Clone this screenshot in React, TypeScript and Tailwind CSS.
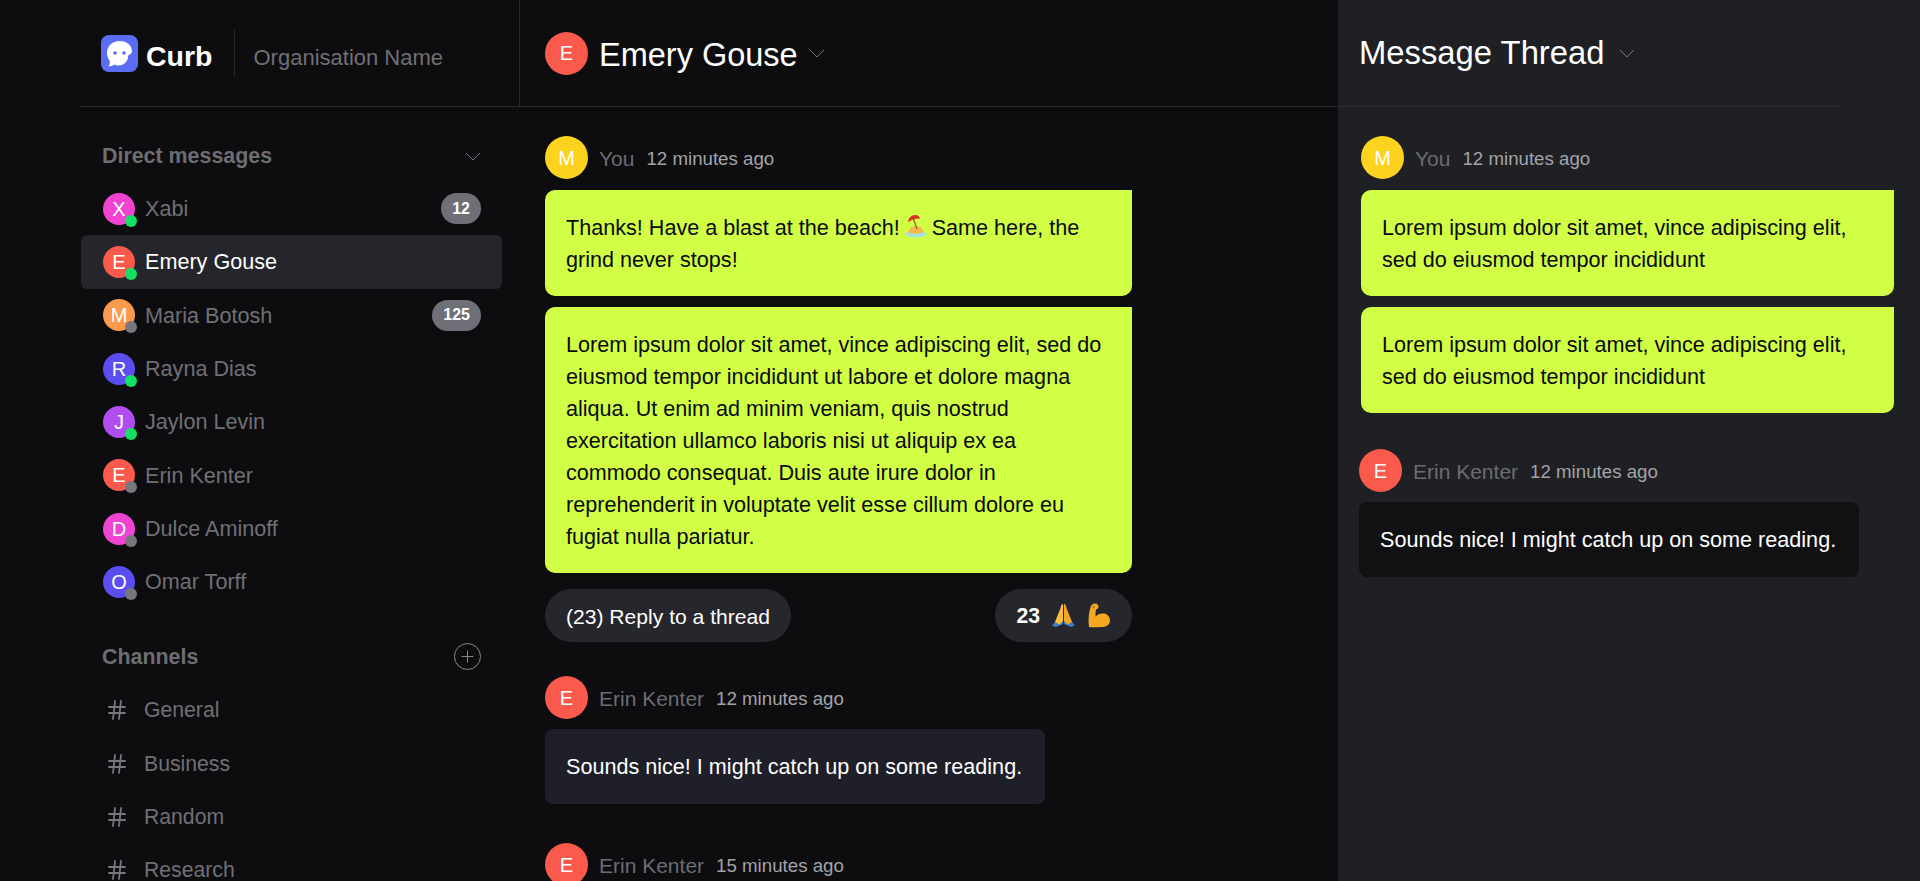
import { Hash, Plus } from "lucide-react";

type Person = { name: string; letter: string; color: string; online: boolean; badge?: string };

const people: Person[] = [
  { name: "Xabi", letter: "X", color: "bg-[#f043d0]", online: true, badge: "12" },
  { name: "Emery Gouse", letter: "E", color: "bg-[#f95a4c]", online: true },
  { name: "Maria Botosh", letter: "M", color: "bg-[#fb9a4d]", online: false, badge: "125" },
  { name: "Rayna Dias", letter: "R", color: "bg-[#5b4ef0]", online: true },
  { name: "Jaylon Levin", letter: "J", color: "bg-[#b04df0]", online: true },
  { name: "Erin Kenter", letter: "E", color: "bg-[#f95a4c]", online: false },
  { name: "Dulce Aminoff", letter: "D", color: "bg-[#ef44d2]", online: false },
  { name: "Omar Torff", letter: "O", color: "bg-[#5b4ef0]", online: false },
];

const channels = ["General", "Business", "Random", "Research"];

const loremShort = "Lorem ipsum dolor sit amet, vince adipiscing elit, sed do eiusmod tempor incididunt";
const loremLong =
  "Lorem ipsum dolor sit amet, vince adipiscing elit, sed do eiusmod tempor incididunt ut labore et dolore magna aliqua. Ut enim ad minim veniam, quis nostrud exercitation ullamco laboris nisi ut aliquip ex ea commodo consequat. Duis aute irure dolor in reprehenderit in voluptate velit esse cillum dolore eu fugiat nulla pariatur.";

function Chevron({ className }: { className?: string }) {
  return (
    <svg width="16" height="9" viewBox="0 0 16 9" fill="none" className={className}>
      <path d="M1 1l7 7 7-7" stroke="currentColor" strokeWidth="1" />
    </svg>
  );
}

function Logo() {
  return (
    <svg width="37" height="37" viewBox="0 0 37 37" className="shrink-0">
      <rect width="37" height="37" rx="8" fill="#5b6df2" />
      <path
        d="M18.500 6C26 6 31 10.500 31 16.500C31 18 30 18.800 28.500 19.500C27 20.200 26.500 21.500 27 23C26 27.500 22 30.500 17.500 30.500C16 30.500 14.500 30.100 13.500 29.500C12 30.700 9.500 31.500 7.500 31.500C8.600 30 9 28 8.800 26C6.800 23.500 6 20.500 6 17.500C6 11 11.500 6 18.500 6Z"
        fill="#fff"
      />
      <circle cx="14" cy="18" r="1.800" fill="#5b6df2" />
      <circle cx="23" cy="18" r="1.800" fill="#5b6df2" />
    </svg>
  );
}

function IslandEmoji() {
  return (
    <svg width="22" height="24" viewBox="0 0 22 24" className="mx-[5px] inline-block align-[-3px]">
      <ellipse cx="11" cy="20" rx="10.500" ry="3.500" fill="#a6e3d8" />
      <path d="M3 18c1-4 5-6 8-6s7 2 8 6c-3 2-13 2-16 0Z" fill="#f6b84a" />
      <path d="M8.500 5l3.500 10" stroke="#8a5a33" strokeWidth="1.200" />
      <path d="M3 8C3.500 3.500 7 .5 11 1c2.500.3 3.500 2 4 3.500C11 4.500 7 5.500 3 8Z" fill="#d8352a" />
    </svg>
  );
}

function PrayEmoji() {
  return (
    <svg width="25" height="25" viewBox="0 0 25 25" className="shrink-0">
      <path d="M4 19l-3 3.500 4 1.500 7-3V18Z" fill="#3f7fc4" />
      <path d="M21 19l3 3.500-4 1.500-7-3V18Z" fill="#3f7fc4" />
      <path d="M12 1c-1.500 0-2 1.500-2.500 4L4 19l4.500 2.500L12 18Z" fill="#fbbf3c" />
      <path d="M13 1c1.500 0 2 1.500 2.500 4L21 19l-4.500 2.500L13 18Z" fill="#f5a623" />
    </svg>
  );
}

function MuscleEmoji() {
  return (
    <svg width="24" height="26" viewBox="0 0 24 26" className="shrink-0">
      <path
        d="M2 24C1 16 2 8 4 3c.6-1.500 2-2.500 4-2.500 2.500 0 3.500 1.500 3.500 3 0 1.500-1 2.500-2.500 3-.5 2.500-.5 5-.3 7 2-2.500 5.300-3.500 8.300-3 3.500.6 6 3.500 6 7 0 4-3.500 6.500-8 6.500-5 0-9 .8-13 0Z"
        fill="#f7a823"
      />
      <circle cx="6.500" cy="4" r="1.300" fill="#c97c10" />
    </svg>
  );
}

function Avatar({ letter, color, size = "big" }: { letter: string; color: string; size?: "big" | "small" }) {
  const dims = size === "big" ? "size-[43px] text-[20px]" : "size-[32px] text-[20px]";
  return (
    <div className={`flex shrink-0 items-center justify-center rounded-full text-white ${dims} ${color}`}>{letter}</div>
  );
}

function PersonRow({ person, active }: { person: Person; active: boolean }) {
  return (
    <div className={`flex h-[53.33px] items-center rounded-md pr-[21px] pl-[22px] ${active ? "bg-[#25262c]" : ""}`}>
      <div className="relative">
        <Avatar letter={person.letter} color={person.color} size="small" />
        <span
          className={`absolute top-[22px] left-[22px] size-[12px] rounded-full ${person.online ? "bg-[#14e064]" : "bg-[#77777c]"}`}
        />
      </div>
      <span className={`mt-[1px] ml-[10px] text-[21.6px] ${active ? "text-white" : "text-[#707075]"}`}>{person.name}</span>
      {person.badge ? (
        <span className="ml-auto flex h-[31px] items-center rounded-full bg-[#6f6f78] px-[11px] text-[16px] font-bold text-white">
          {person.badge}
        </span>
      ) : null}
    </div>
  );
}

function MessageMeta({ name, time, letter, color }: { name: string; time: string; letter: string; color: string }) {
  return (
    <div className="flex h-[43px] items-center">
      <Avatar letter={letter} color={color} />
      <span className="mt-[2px] ml-[11px] text-[21px] text-[#6c6c72]">{name}</span>
      <span className="mt-[4px] ml-[12px] text-[18.7px] text-[#a3a3a8]">{time}</span>
    </div>
  );
}

function LimeBubble({ children, className }: { children: React.ReactNode; className?: string }) {
  return (
    <div
      className={`rounded-[10px] rounded-tr-none bg-[#d0ff45] px-[21px] pt-[22px] pb-[20px] text-[21.6px] leading-[32px] text-[#0a0a0a] ${className ?? ""}`}
    >
      {children}
    </div>
  );
}

function DarkBubble({ bg, width }: { bg: string; width: string }) {
  return (
    <div className={`mt-[10px] flex h-[75px] items-center rounded-[8px] px-[21px] pt-[2px] text-[21.6px] text-white ${bg} ${width}`}>
      Sounds nice! I might catch up on some reading.
    </div>
  );
}

export default function App() {
  return (
    <div className="flex h-[881px] overflow-hidden bg-[#0d0d10] pl-[80px] font-['Liberation_Sans',sans-serif]">
      <aside className="w-[440px] shrink-0">
        <header className="flex h-[107px] items-center border-r border-b border-[#2a2a2e] pl-[21px]">
          <Logo />
          <span className="mt-[6px] ml-[8px] text-[28.500px] font-bold text-white">Curb</span>
          <span className="ml-[21px] h-[46px] w-px bg-[#2a2a2e]" />
          <span className="mt-[8px] ml-[19px] text-[22px] text-[#707075]">Organisation Name</span>
        </header>

        <div className="mt-[37px] flex h-[24px] w-[401px] items-center justify-between pl-[22px] text-[21.4px] font-bold text-[#6d6d72]">
          Direct messages
          <Chevron className="text-[#77777d]" />
        </div>
        <div className="mt-[14px] ml-px w-[421px]">
          {people.map((person) => (
            <PersonRow key={person.name} person={person} active={person.name === "Emery Gouse"} />
          ))}
        </div>

        <div className="mt-[34px] flex h-[28px] w-[401px] items-center justify-between pl-[22px] text-[21.4px] font-bold text-[#6d6d72]">
          Channels
          <span className="flex size-[27px] items-center justify-center rounded-full border border-[#8a8a8f] text-[#8a8a8f]">
            <Plus size={19} strokeWidth={1.2} />
          </span>
        </div>
        <div className="mt-[13px]">
          {channels.map((channel) => (
            <div key={channel} className="flex h-[53.33px] items-center pl-[25px] text-[21.2px] text-[#707075]">
              <Hash size={24} strokeWidth={1.8} className="shrink-0 text-[#77777d]" />
              <span className="ml-[15px]">{channel}</span>
            </div>
          ))}
        </div>
      </aside>

      <main className="w-[818px] shrink-0">
        <header className="flex h-[107px] items-center border-b border-[#2a2a2e] pl-[25px]">
          <Avatar letter="E" color="bg-[#f95a4c]" />
          <span className="mt-[4px] ml-[11px] text-[32.500px] text-white">Emery Gouse</span>
          <Chevron className="ml-[11px] text-[#77777d]" />
        </header>
        <div className="w-[612px] pt-[29px] pl-[25px]">
          <MessageMeta name="You" time="12 minutes ago" letter="M" color="bg-[#fdd31f]" />
          <LimeBubble className="mt-[11px]">
            Thanks! Have a blast at the beach!
            <IslandEmoji />
            Same here, the grind never stops!
          </LimeBubble>
          <LimeBubble className="mt-[11px]">{loremLong}</LimeBubble>
          <div className="mt-[16px] flex justify-between">
            <div className="flex h-[53px] items-center rounded-full bg-[#26272d] px-[21px] pt-[2px] text-[21.1px] text-white">
              (23) Reply to a thread
            </div>
            <div className="flex h-[53px] items-center gap-[11px] rounded-full bg-[#26272d] px-[21px] text-[21.2px] font-bold text-white">
              23
              <PrayEmoji />
              <MuscleEmoji />
            </div>
          </div>
          <div className="mt-[34px]">
            <MessageMeta name="Erin Kenter" time="12 minutes ago" letter="E" color="bg-[#f95a4c]" />
            <DarkBubble bg="bg-[#1e1f28]" width="w-[500px]" />
          </div>
          <div className="mt-[39px]">
            <MessageMeta name="Erin Kenter" time="15 minutes ago" letter="E" color="bg-[#f95a4c]" />
          </div>
        </div>
      </main>

      <section className="min-w-0 flex-1 bg-[#1f2024]">
        <header className="flex h-[107px] w-[502px] items-center border-b border-[#2b2c30] pl-[21px]">
          <span className="text-[32.800px] text-white">Message Thread</span>
          <Chevron className="ml-[14px] text-[#77777d]" />
        </header>
        <div className="pt-[29px] pl-[21px]">
          <div className="w-[535px] pl-[2px]">
            <MessageMeta name="You" time="12 minutes ago" letter="M" color="bg-[#fdd31f]" />
            <LimeBubble className="mt-[11px]">{loremShort}</LimeBubble>
            <LimeBubble className="mt-[11px]">{loremShort}</LimeBubble>
          </div>
          <div className="mt-[36px]">
            <MessageMeta name="Erin Kenter" time="12 minutes ago" letter="E" color="bg-[#f95a4c]" />
            <DarkBubble bg="bg-[#111114]" width="w-[500px]" />
          </div>
        </div>
      </section>
    </div>
  );
}
